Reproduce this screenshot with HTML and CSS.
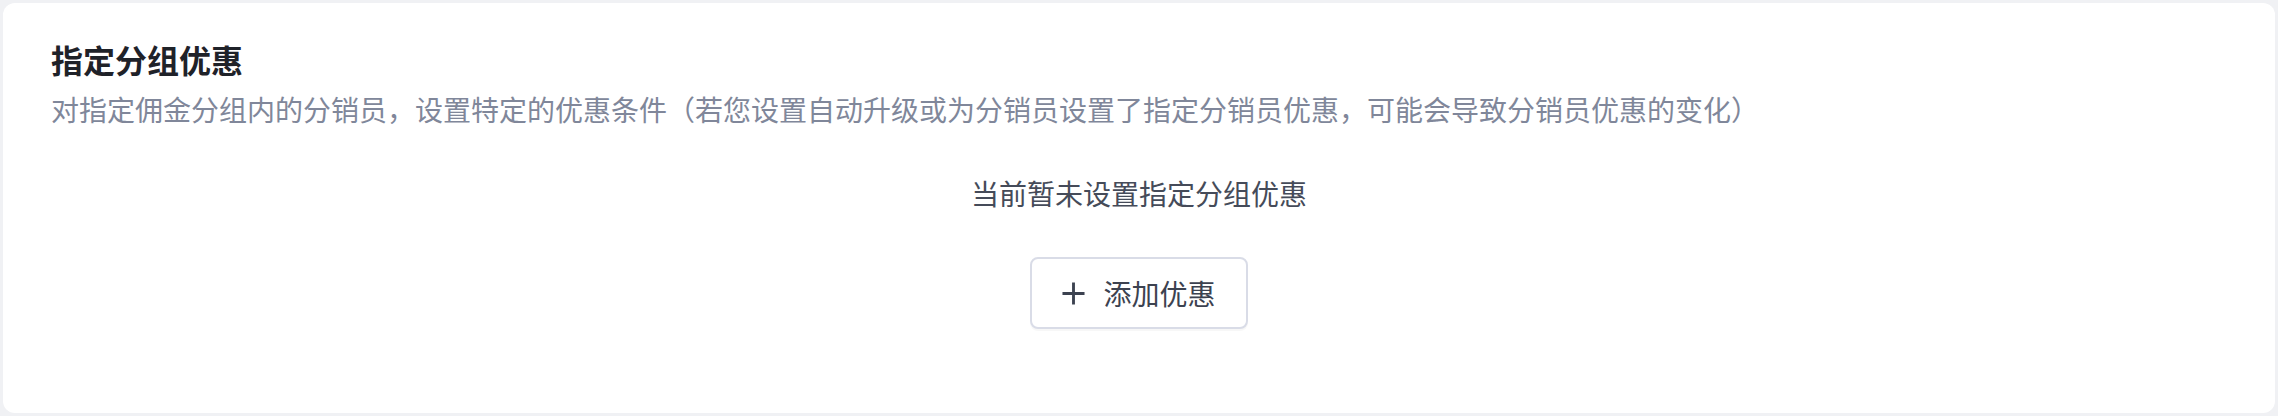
FILE: index.html
```html
<!DOCTYPE html>
<html lang="zh-CN">

<head>
    <meta charset="utf-8">
    <title>指定分组优惠</title>
    <link rel="stylesheet" href="styles.css">
</head>

<body>
<div class="card">
    <!-- 标题 -->
    <div class="card-title">指定分组优惠</div>
    <div class="card-desc">对指定佣金分组内的分销员，设置特定的优惠条件（若您设置自动升级或为分销员设置了指定分销员优惠，可能会导致分销员优惠的变化）</div>

    <!-- 空状态 -->
    <div class="empty">
        <p class="empty-text">当前暂未设置指定分组优惠</p>
        <button class="add-btn">
            <svg class="plus" width="24" height="24" viewBox="0 0 24 24">
                <path d="M12 0.5V23.5M0.5 12H23.5" stroke="currentColor" stroke-width="3" fill="none"/>
            </svg>
            <span>添加优惠</span>
        </button>
    </div>
</div>
</body>

</html>
```

FILE: styles.css
```css
* {
    margin: 0;
    padding: 0;
    box-sizing: border-box;
}

body {
    background-color: #f0f1f4;
    padding: 3px;
    font-family: "Noto Sans CJK SC", "Noto Sans", sans-serif;
}

.card {
    background-color: #FFFFFF;
    border-radius: 12px;
    padding: 32px 48px 84px 48px;
    height: 410px;
}

.card-title {
    font-size: 32px;
    line-height: 48px;
    font-weight: 600;
    color: #1f2229;
}

.card-desc {
    margin-top: 6px;
    font-size: 28px;
    line-height: 40px;
    color: #80879a;
}

.empty {
    display: flex;
    flex-direction: column;
    align-items: center;
}

.empty-text {
    margin-top: 44px;
    font-size: 28px;
    line-height: 40px;
    color: #454b59;
}

.add-btn {
    margin-top: 44px;
    height: 72px;
    padding: 0 30px;
    display: flex;
    align-items: center;
    gap: 18px;
    background-color: #FFFFFF;
    border: 2px solid #d9dce7;
    border-radius: 8px;
    box-shadow: 0 2px 0 rgba(0, 0, 0, 0.03);
    font-family: inherit;
    font-size: 28px;
    color: #3c4250;
}

.add-btn .plus {
    width: 23px;
    height: 23px;
}
```
